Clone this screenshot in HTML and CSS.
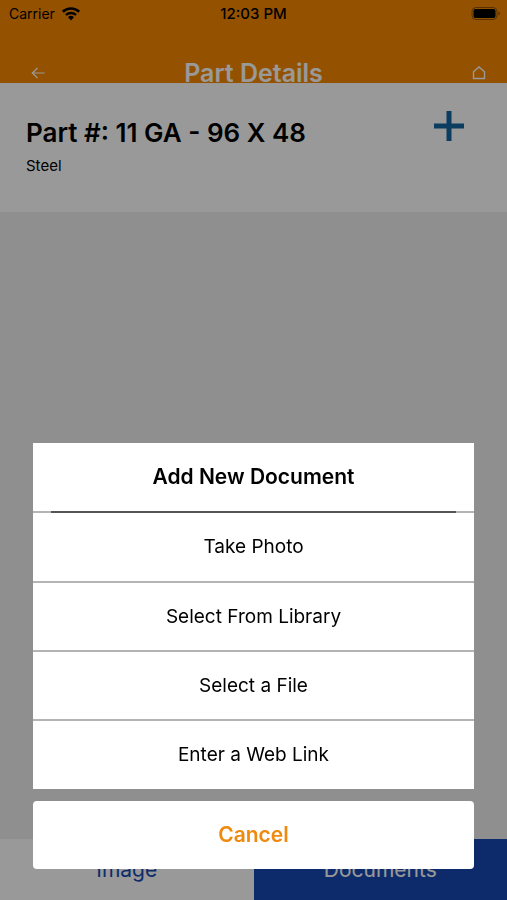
FILE: index.html
```html
<!DOCTYPE html>
<html lang="en">
<head>
    <meta charset="UTF-8">
    <meta name="viewport" content="width=device-width, initial-scale=1.0">
    <title>Part Details</title>
    <link rel="stylesheet" href="styles.css">
</head>
<body>
    <div class="screen">
        <header class="header">
            <div class="status-bar">
                <div class="carrier">
                    <span>Carrier</span>
                    <svg width="20" height="14" viewBox="0 0 20 14" fill="none" stroke="#000" stroke-width="2.6">
                        <path d="M1.8 4.800a12 12 0 0 1 16.400 0"/>
                        <path d="M4.900 8a7.500 7.500 0 0 1 10.200 0" stroke-width="2.300"/>
                        <path d="M10 13.400L7 10.300a4.300 4.300 0 0 1 6 0z" fill="#000" stroke="none"/>
                    </svg>
                </div>
                <div class="time">12:03 PM</div>
                <div class="battery">
                    <svg width="30" height="14" viewBox="0 0 30 14">
                        <rect x="1" y="0.5" width="25" height="12" rx="4" fill="none" stroke="#000" stroke-opacity="0.4"/>
                        <rect x="2.5" y="2" width="22" height="9" rx="2" fill="#000"/>
                        <path d="M27.5 4.5v4q1.5-.6 1.5-2t-1.5-2z" fill="#000" fill-opacity="0.4"/>
                    </svg>
                </div>
            </div>
            <div class="nav-bar">
                <button class="icon-button" aria-label="Back">
                    <svg width="14" height="12" viewBox="0 0 14 12" fill="none" stroke="#fff" stroke-width="1.2">
                        <path d="M13.5 6H1.5M6.5 1L1.3 6l5.2 5"/>
                    </svg>
                </button>
                <h1>Part Details</h1>
                <button class="icon-button" aria-label="Home">
                    <svg width="14" height="14" viewBox="0 0 14 14" fill="none" stroke="#fff" stroke-width="1.4">
                        <path d="M1.500 12.500V5.800L7 1l5.500 4.800v6.700z"/>
                    </svg>
                </button>
            </div>
        </header>

        <section class="part">
            <div>
                <h2>Part #: 11 GA - 96 X 48</h2>
                <p>Steel</p>
            </div>
            <button class="icon-button" aria-label="Add document">
                <svg width="30" height="30" viewBox="0 0 30 30" stroke="#12669f" stroke-width="5">
                    <path d="M15 0v30M0 15h30"/>
                </svg>
            </button>
        </section>

        <nav class="tabs">
            <button class="tab">Image</button>
            <button class="tab active">Documents</button>
        </nav>
    </div>

    <!-- Action sheet -->
    <div class="overlay">
        <div class="sheet" role="dialog" aria-labelledby="sheet-title">
            <div class="options">
                <h3 id="sheet-title">Add New Document</h3>
                <button>Take Photo</button>
                <button>Select From Library</button>
                <button>Select a File</button>
                <button>Enter a Web Link</button>
            </div>
            <button class="cancel">Cancel</button>
        </div>
    </div>
</body>
</html>
```

FILE: styles.css
```css
* {
    box-sizing: border-box;
}
body {
    font-family: Inter, "Liberation Sans", sans-serif;
    margin: 0;
    color: #000;
}
h1, h2, h3, p {
    margin: 0;
    font-weight: 600;
}
button {
    font-family: inherit;
    border: none;
    padding: 0;
    background: none;
    color: inherit;
    cursor: pointer;
}
svg {
    display: block;
}
.screen {
    min-height: 100vh;
    display: flex;
    flex-direction: column;
    background-color: #eee;
}
.header {
    background-color: #f78900;
}
.status-bar {
    display: grid;
    grid-template-columns: 1fr auto 1fr;
    align-items: center;
    height: 27px;
    padding: 0 6px;
    font-size: 14px;
}
.carrier {
    display: flex;
    align-items: center;
    gap: 6px;
    padding-left: 3px;
}
.time {
    font-size: 15px;
    font-weight: 500;
}
.battery {
    justify-self: end;
}
.nav-bar {
    display: grid;
    grid-template-columns: 1fr auto 1fr;
    align-items: center;
    height: 56px;
    padding: 31px 21px 0;
    overflow: hidden;
    color: white;
}
.nav-bar h1 {
    font-size: 25px;
    line-height: 30px;
}
.nav-bar .icon-button:first-child {
    padding-left: 10px;
}
.nav-bar .icon-button:last-child {
    justify-self: end;
}
.icon-button {
    display: flex;
}
.part {
    display: flex;
    justify-content: space-between;
    align-items: flex-start;
    padding: 28px 43px 36px 26px;
    background-color: white;
}
.part h2 {
    font-size: 26px;
    line-height: 44px;
}
.part p {
    font-size: 15px;
    font-weight: 400;
    line-height: 21px;
}
.tabs {
    display: flex;
    margin-top: auto;
}
.tab {
    flex: 1;
    padding: 18px 0 17px;
    background-color: white;
    color: #1649b2;
    font-size: 21px;
    line-height: 26px;
}
.tab.active {
    background-color: #1649b2;
    color: white;
}
.overlay {
    position: fixed;
    inset: 0;
    display: flex;
    align-items: flex-end;
    padding: 0 33px 31px;
    background-color: rgba(0, 0, 0, 0.4);
}
.sheet {
    flex: 1;
    display: flex;
    flex-direction: column;
    gap: 12px;
}
.options {
    display: flex;
    flex-direction: column;
    padding-bottom: 1px;
    background-color: white;
}
/* the dark rule lies over the light separator */
.options h3 {
    padding-bottom: 2px;
    font-size: 21px;
    line-height: 68px;
    text-align: center;
    background:
        linear-gradient(#555, #555) center bottom / calc(100% - 36px) 2px no-repeat,
        linear-gradient(#b4b4b4, #b4b4b4) center bottom / 100% 2px no-repeat;
}
.options button {
    font-size: 19px;
    line-height: 67px;
    border-top: 2px solid #b4b4b4;
}
.options h3 + button {
    border-top: none;
    line-height: 68px;
}
.cancel {
    border-radius: 4px;
    background-color: white;
    color: #ee8a10;
    font-size: 21px;
    font-weight: 600;
    line-height: 68px;
}
```
